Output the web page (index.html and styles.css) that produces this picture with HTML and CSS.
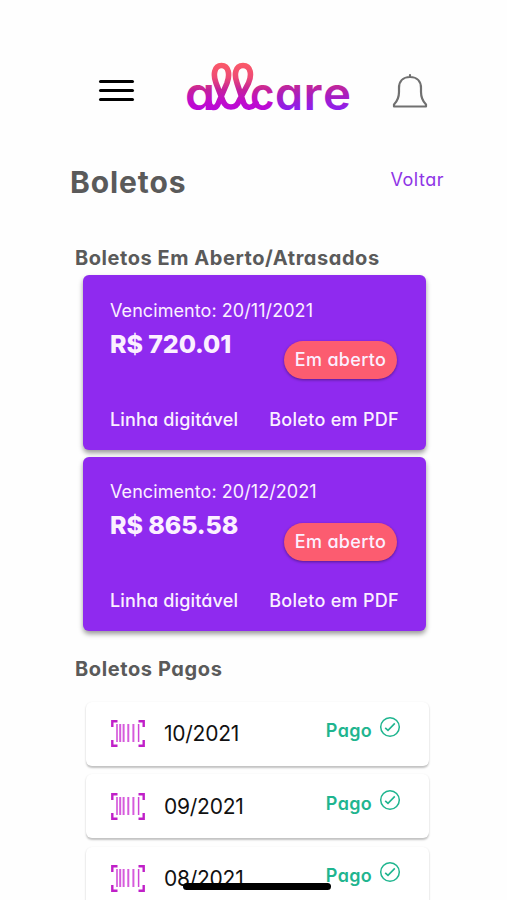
FILE: index.html
```html
<!DOCTYPE html>
<html lang="pt-BR">
<head>
  <meta charset="UTF-8" />
  <meta name="viewport" content="width=device-width, initial-scale=1.0"/>
  <title>Boletos</title>
  <link rel="stylesheet" href="styles.css">
</head>
<body>

  <!-- icons used more than once -->
  <svg class="sprite" width="0" height="0">
    <symbol id="barcode" viewBox="0 0 34 27">
      <path d="M1.3 7V1.3H6.5M27.5 1.3H32.7V7M1.3 20V25.7H6.5M27.5 25.7H32.7V20" fill="none" stroke="#c020c8" stroke-width="2.4"/>
      <path d="M6 4V22M27.6 4V22" stroke="#cf45d6" stroke-width="1.5"/>
      <path d="M9.2 4V22M12.6 4V22M17.3 4V22M22.4 4V22" stroke="#d65bdc" stroke-width="2"/>
    </symbol>
    <symbol id="check" viewBox="0 0 22 22">
      <circle cx="11" cy="11" r="9.3" fill="none" stroke="#1fb58f" stroke-width="1.5"/>
      <path d="M6.2 11.8L9 14.4L15.8 7.4" fill="none" stroke="#1fb58f" stroke-width="1.6"/>
    </symbol>
  </svg>

  <div class="container">

    <header class="topbar">
      <button class="menu"><span></span><span></span><span></span></button>
      <svg class="logo" viewBox="0 0 180 65" role="img" aria-label="allcare">
        <defs>
          <linearGradient id="brand" gradientUnits="userSpaceOnUse" x1="0" y1="8" x2="0" y2="56">
            <stop offset="0" stop-color="#fb5a68"/>
            <stop offset="0.3" stop-color="#ee4b75"/>
            <stop offset="0.55" stop-color="#c4229a"/>
            <stop offset="0.8" stop-color="#c00ccc"/>
            <stop offset="1" stop-color="#b808da"/>
          </linearGradient>
          <linearGradient id="brand-end" gradientUnits="userSpaceOnUse" x1="0" y1="28" x2="0" y2="56">
            <stop offset="0" stop-color="#c82a90"/>
            <stop offset="0.45" stop-color="#a81cc0"/>
            <stop offset="1" stop-color="#8a20f4"/>
          </linearGradient>
        </defs>
        <g class="logo-text">
          <text x="5" y="55" textLength="30" lengthAdjust="spacingAndGlyphs" fill="url(#brand)">a</text>
          <text x="70" y="55" textLength="24.500" lengthAdjust="spacingAndGlyphs" fill="url(#brand)">c</text>
          <text x="95" y="55" textLength="28" lengthAdjust="spacingAndGlyphs" fill="url(#brand-end)">a</text>
          <text x="123.500" y="55" textLength="19" lengthAdjust="spacingAndGlyphs" fill="url(#brand-end)">r</text>
          <text x="143" y="55" textLength="28" lengthAdjust="spacingAndGlyphs" fill="url(#brand-end)">e</text>
        </g>
        <path class="ribbon" stroke="url(#brand)" d="M29 47C30 54 36 54 38 49L47 28C50 20 49 10.500 41.500 10.500C34 10.500 33 20 36 28L43 46C46 54 56 54 59 46L68.500 28C72 20 71 10.500 63 10.500C55 10.500 54 20 57 28L63 46C65 54 72 54 76 48"/>
      </svg>
      <svg class="bell" viewBox="0 0 36 36">
        <path d="M18 4C10.500 4 7 9 7 15V19C7 25 5 28.500 2 31.500V33.500H34V31.500C31 28.500 29 25 29 19V15C29 9 25.500 4 18 4ZM18 4V2" fill="none" stroke="#707070" stroke-width="2.2" stroke-linejoin="round" stroke-linecap="round"/>
      </svg>
    </header>

    <div class="title-row">
      <h1>Boletos</h1>
      <a class="back">Voltar</a>
    </div>

    <h2>Boletos Em Aberto/Atrasados</h2>
    <div class="open-list">
      <div class="card">
        <div class="due">Vencimento: 20/11/2021</div>
        <div class="price">R$ 720.01</div>
        <span class="badge">Em aberto</span>
        <div class="links"><a class="line">Linha digitável</a><a class="pdf">Boleto em PDF</a></div>
      </div>
      <div class="card">
        <div class="due">Vencimento: 20/12/2021</div>
        <div class="price">R$ 865.58</div>
        <span class="badge">Em aberto</span>
        <div class="links"><a class="line">Linha digitável</a><a class="pdf">Boleto em PDF</a></div>
      </div>
    </div>

    <h2 class="paid-title">Boletos Pagos</h2>
    <div class="paid-list">
      <div class="row">
        <svg class="barcode"><use href="#barcode"/></svg>
        <span class="month">10/2021</span>
        <span class="paid">Pago</span>
        <svg class="check"><use href="#check"/></svg>
      </div>
      <div class="row">
        <svg class="barcode"><use href="#barcode"/></svg>
        <span class="month">09/2021</span>
        <span class="paid">Pago</span>
        <svg class="check"><use href="#check"/></svg>
      </div>
      <div class="row">
        <svg class="barcode"><use href="#barcode"/></svg>
        <span class="month">08/2021</span>
        <span class="paid">Pago</span>
        <svg class="check"><use href="#check"/></svg>
      </div>
    </div>

  </div>

  <div class="home-bar"></div>

</body>
</html>
```
FILE: styles.css
```css
* {
  box-sizing: border-box;
}

body {
  margin: 0;
  height: 900px;
  overflow: hidden;
  background-color: #fefefe;
  font-family: Inter, "Open Sans", sans-serif;
  font-feature-settings: "cv11";
  white-space: nowrap;
}

.sprite {
  position: absolute;
}

.container {
  padding: 55px 63px 0 70px;
}

/* top bar */
.topbar {
  display: flex;
  align-items: flex-start;
  height: 105px;
  padding-left: 29px;
}
.menu {
  display: flex;
  flex-direction: column;
  gap: 6px;
  width: 35px;
  margin-top: 25px;
  padding: 0;
  border: none;
  background: none;
}
.menu span {
  width: 35px;
  height: 3px;
  border-radius: 2px;
  background: #000;
}
.logo {
  width: 180px;
  height: 65px;
  margin-left: 46px;
}
.logo-text {
  font-size: 45px;
  font-weight: 600;
}
.ribbon {
  fill: none;
  stroke-width: 5.6;
  stroke-linecap: round;
}
.bell {
  width: 36px;
  height: 36px;
  margin: 18px 0 0 32px;
}

/* page title */
.title-row {
  display: flex;
  justify-content: space-between;
  height: 87px;
}
h1 {
  margin: 4px 0 0;
  font-size: 30px;
  line-height: 36px;
  font-weight: 700;
  letter-spacing: 0.9px;
  color: #5a5a5a;
}
.back {
  margin-top: 9px;
  font-size: 18px;
  line-height: 22px;
  letter-spacing: 0.5px;
  color: #8f35e6;
}

h2 {
  margin: 0 0 0 5px;
  font-size: 20px;
  line-height: 22px;
  font-weight: 700;
  letter-spacing: 0.55px;
  color: #5a5a5a;
}

/* open slips */
.open-list {
  display: flex;
  flex-direction: column;
  gap: 7px;
  margin: 6px 0 0 13px;
  width: 343px;
}
.card {
  position: relative;
  height: 174.700px;
  padding: 24.500px 27px 0;
  border-radius: 6px;
  background: #8f2aef;
  box-shadow: 0 3px 5px rgba(0,0,0,0.4);
  color: #fbf0ff;
}
.due {
  font-size: 18px;
  line-height: 22px;
  letter-spacing: 0.07px;
}
.price {
  margin-top: 7px;
  font-size: 25px;
  line-height: 30px;
  font-weight: 800;
  letter-spacing: -0.1px;
}
.badge {
  position: absolute;
  top: 66px;
  right: 29px;
  width: 113px;
  height: 38px;
  border-radius: 19px;
  background: #fc5c70;
  box-shadow: 0 1px 3px rgba(0,0,0,0.4);
  font-size: 18px;
  line-height: 37px;
  font-weight: 500;
  letter-spacing: 0.3px;
  text-align: center;
}
.links {
  display: flex;
  justify-content: space-between;
  margin-top: 50px;
  font-size: 18px;
  line-height: 22px;
  font-weight: 500;
}
.line {
  letter-spacing: 0.15px;
}
.pdf {
  letter-spacing: 0.3px;
}

/* paid slips */
.paid-title {
  margin-top: 27px;
  letter-spacing: 0.6px;
}
.paid-list {
  display: flex;
  flex-direction: column;
  gap: 8.700px;
  margin: 21.200px 0 0 16px;
  width: 343px;
}
.row {
  display: flex;
  align-items: flex-start;
  height: 64px;
  padding: 0 28px 0 25px;
  border-radius: 6px;
  background: #fff;
  box-shadow: 0 1.5px 2px rgba(0,0,0,0.24);
}
.barcode {
  width: 34px;
  height: 27px;
  margin-top: 18.500px;
}
.month {
  margin: 19.500px 0 0 19px;
  font-size: 21px;
  line-height: 25px;
  letter-spacing: -0.25px;
  color: #111;
}
.paid {
  margin: 18.500px 0 0 auto;
  font-size: 18px;
  line-height: 22px;
  font-weight: 600;
  letter-spacing: 0.3px;
  color: #1fb58f;
}
.check {
  width: 22px;
  height: 22px;
  margin: 14.500px 0 0 7px;
}

.home-bar {
  position: fixed;
  left: 183px;
  top: 883px;
  width: 148px;
  height: 7px;
  border-radius: 4px;
  background: #000;
}
```
